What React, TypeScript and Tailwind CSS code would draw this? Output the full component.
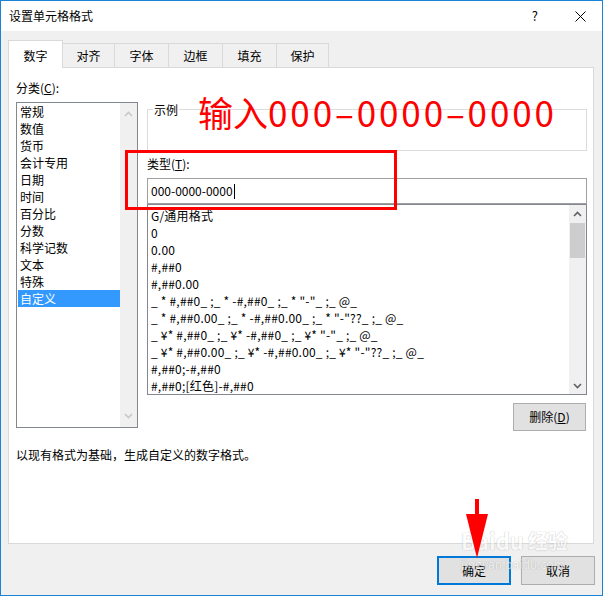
import React from "react";

const F = { fontFamily: '"Noto Sans CJK SC", "Noto Sans", sans-serif' };

const categories = ["常规", "数值", "货币", "会计专用", "日期", "时间", "百分比", "分数", "科学记数", "文本", "特殊", "自定义"];
const formats = [
  "G/通用格式",
  "0",
  "0.00",
  "#,##0",
  "#,##0.00",
  '_ * #,##0_ ;_ * -#,##0_ ;_ * "-"_ ;_ @_',
  '_ * #,##0.00_ ;_ * -#,##0.00_ ;_ * "-"??_ ;_ @_',
  '_ ¥* #,##0_ ;_ ¥* -#,##0_ ;_ ¥* "-"_ ;_ @_',
  '_ ¥* #,##0.00_ ;_ ¥* -#,##0.00_ ;_ ¥* "-"??_ ;_ @_',
  "#,##0;-#,##0",
  "#,##0;[红色]-#,##0",
];

function Chevron({ up, color }: { up: boolean; color: string }) {
  return (
    <svg width="9" height="6" viewBox="0 0 9 6">
      <polyline
        points={up ? "1,5 4.5,1.5 8,5" : "1,1 4.5,4.5 8,1"}
        fill="none"
        stroke={color}
        strokeWidth="1.6"
      />
    </svg>
  );
}

export default function App() {
  const tabs = [
    { t: "对齐", w: "w-[52px]" },
    { t: "字体", w: "w-[54px]" },
    { t: "边框", w: "w-[54px]" },
    { t: "填充", w: "w-[54px]" },
    { t: "保护", w: "w-[52px]" },
  ];
  return (
    <div
      style={F}
      className="relative w-[603px] h-[596px] bg-[#f0f0f0] border border-[#1883d7] flex flex-col text-[12px] text-black overflow-hidden"
    >
      {/* title bar */}
      <div className="h-[30px] bg-white flex items-center pl-[8px] shrink-0">
        <span className="leading-[16px]">设置单元格格式</span>
        <div className="ml-auto flex items-center">
          <span className="text-[13px] leading-[16px] mr-[37px]">?</span>
          <svg width="11" height="11" viewBox="0 0 11 11" className="mr-[16px]">
            <path d="M0.5 0.5 L10.5 10.5 M10.5 0.5 L0.5 10.5" stroke="#000" strokeWidth="1" />
          </svg>
        </div>
      </div>

      {/* body */}
      <div className="flex flex-col pl-[7px] pt-[9px]">
        {/* tabs */}
        <div className="flex items-end h-[27px]">
          <div className="relative z-10 w-[55px] h-[28px] -mb-px bg-white border-l border-t border-r border-[#d9d9d9] flex items-center justify-center pt-[2px]">
            数字
          </div>
          {tabs.map((x) => (
            <div
              key={x.t}
              className={`${x.w} h-[24px] border-t border-r border-[#d9d9d9] flex items-center justify-center`}
            >
              {x.t}
            </div>
          ))}
        </div>

        {/* panel */}
        <div className="w-[586px] h-[477px] bg-white border border-[#d9d9d9] pl-[7px] pr-[6px] pt-[12px] flex flex-col">
          <div className="flex gap-[9px]">
            {/* left column */}
            <div className="w-[122px] flex flex-col">
              <div className="leading-[16px]">
                分类(<span className="underline">C</span>):
              </div>
              <div className="mt-[6px] h-[326px] border border-[#828790] flex">
                <div className="flex-1 flex flex-col">
                  {categories.map((c, i) => (
                    <div
                      key={c}
                      className={`h-[17px] leading-[17px] ml-[1px] pl-[2px] ${
                        i === categories.length - 1 ? "bg-[#3399ff] text-white" : ""
                      }`}
                    >
                      {c}
                    </div>
                  ))}
                </div>
                <div className="w-[17px] bg-[#f0f0f0] flex flex-col items-center justify-between py-[8px]">
                  <Chevron up color="#c8c8c8" />
                  <Chevron up={false} color="#c8c8c8" />
                </div>
              </div>
            </div>

            {/* right column */}
            <div className="w-[440px] flex flex-col">
              <div className="relative mt-[29px] h-[42px] border border-[#dcdcdc]">
                <span className="absolute -top-[8px] left-[5px] bg-white px-[1px] leading-[16px]">示例</span>
              </div>
              <div className="mt-[5px] leading-[16px]">
                类型(<span className="underline">T</span>):
              </div>
              <div className="mt-[6px] h-[26px] border border-[#a0a0a0] flex items-center pl-[3px]">
                <span className="leading-[16px]">000-0000-0000</span>
                <span className="w-px h-[15px] bg-black ml-[1px]" />
              </div>
              <div className="h-[191px] border border-[#828790] flex overflow-hidden">
                <div className="flex-1 flex flex-col pt-[2px] pl-[3px] overflow-hidden tracking-[0.2px]">
                  {formats.map((f) => (
                    <div key={f} className="h-[17px] leading-[17px] whitespace-pre shrink-0">
                      {f}
                    </div>
                  ))}
                </div>
                <div className="w-[17px] bg-[#f0f0f0] flex flex-col items-center">
                  <div className="h-[17px] flex items-center justify-center">
                    <Chevron up color="#606060" />
                  </div>
                  <div className="w-[15px] h-[35px] bg-[#cdcdcd] mt-[1px]" />
                  <div className="mt-auto h-[17px] flex items-center justify-center">
                    <Chevron up={false} color="#606060" />
                  </div>
                </div>
              </div>
              <div className="self-end mr-[1px] mt-[8px] w-[73px] h-[28px] bg-[#e1e1e1] border border-[#adadad] flex items-center justify-center">
                删除(<span className="underline">D</span>)
              </div>
            </div>
          </div>
          <div className="mt-[16px] leading-[16px]">以现有格式为基础，生成自定义的数字格式。</div>
        </div>

        {/* buttons */}
        <div className="mt-[12px] flex justify-end gap-[10px] pr-[7px]">
          <div className="w-[74px] h-[29px] bg-[#e1e1e1] border-2 border-[#0078d7] flex items-center justify-center">
            确定
          </div>
          <div className="w-[74px] h-[29px] bg-[#e1e1e1] border border-[#adadad] flex items-center justify-center">
            取消
          </div>
        </div>
      </div>

      {/* annotations */}
      <div className="absolute left-[197px] top-[93px] text-[35px] leading-none text-[#ff0000] whitespace-pre flex">
        <span>输入</span>
        <span className="tracking-[2.9px]">000–0000–0000</span>
      </div>
      <div className="absolute left-[124px] top-[149px] w-[272px] h-[60px] border-[3px] border-[#ff0000]" />

      {/* watermark */}
      <div className="absolute left-[460px] top-[528px] flex flex-col opacity-50 pointer-events-none">
        <div className="flex items-end text-[22px] font-bold leading-none text-white [text-shadow:0_0_1px_#999,0_0_1px_#999]">
          <span>Bai</span>
          <span>du</span>
          <span className="ml-[4px] text-[20px]">经验</span>
        </div>
        <div className="text-[12px] leading-[14px] mt-[6px] text-white [text-shadow:0_0_1px_#999,0_0_1px_#999]">
          jingyan.baidu.com
        </div>
      </div>

      <svg className="absolute left-[463px] top-[497px]" width="26" height="62" viewBox="0 0 26 62">
        <polygon points="11,1 15,1 15,16 24,16 13,60 2,16 11,16" fill="#ff0000" />
      </svg>
    </div>
  );
}
